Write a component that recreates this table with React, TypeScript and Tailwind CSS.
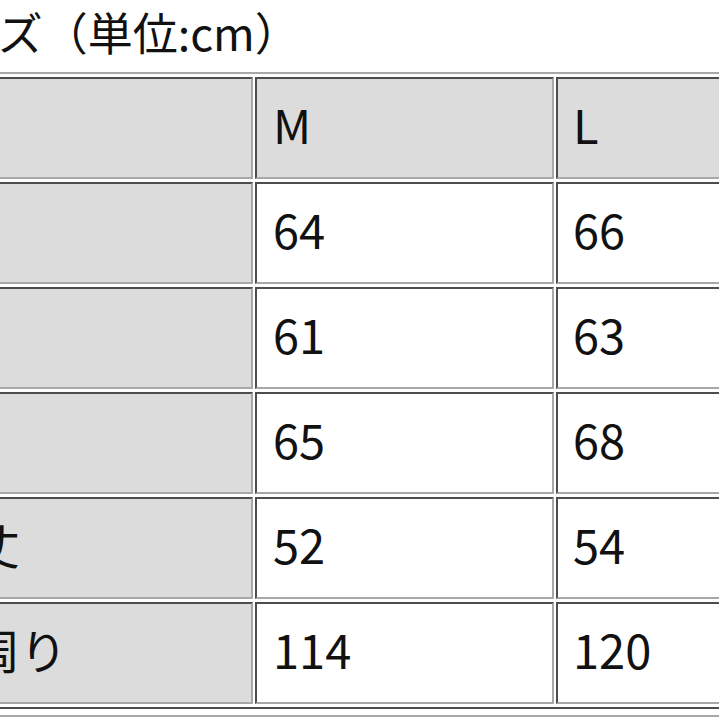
import React from 'react';

const rows = [
  { label: '着', m: '64', l: '66' },
  { label: '肩', m: '61', l: '63' },
  { label: '身', m: '65', l: '68' },
  { label: '袖丈', m: '52', l: '54' },
  { label: '胴周り', m: '114', l: '120' },
];

const cell = 'h-[102px] border-2 border-t-[#4d4d4d] border-l-[#4d4d4d] border-b-[#a8a8a8] border-r-[#a8a8a8] pb-[10px] text-left align-middle font-normal';

export default function App() {
  return (
    <div
      className="w-full h-[719px] overflow-hidden bg-white text-[#111]"
      style={{ fontFamily: '"Noto Sans CJK JP", "Noto Sans", sans-serif' }}
    >
      <div className="ml-[-91px] w-max">
        <div className="h-[72px] text-[45px] leading-[64px] whitespace-nowrap">サイズ（単位:cm）</div>
        <table className="border-separate border-spacing-x-[2px] border-spacing-y-[3px] border-2 border-t-[#a8a8a8] border-l-[#a8a8a8] border-b-[#4d4d4d] border-r-[#4d4d4d] text-[47px] leading-none">
          <thead>
            <tr>
              <th className={`${cell} pl-[11px] w-[340px] bg-[#dcdcdc]`}></th>
              <th className={`${cell} pl-[16px] w-[299px] bg-[#dcdcdc]`}>M</th>
              <th className={`${cell} pl-[15px] w-[299px] bg-[#dcdcdc]`}>L</th>
            </tr>
          </thead>
          <tbody>
            {rows.map((r) => (
              <tr key={r.label}>
                <td className={`${cell} pl-[11px] bg-[#dcdcdc]`}>{r.label}</td>
                <td className={`${cell} pl-[16px] bg-white`}>{r.m}</td>
                <td className={`${cell} pl-[15px] bg-white`}>{r.l}</td>
              </tr>
            ))}
          </tbody>
        </table>
        <div className="mt-[6px] w-[1200px] border-t-2 border-[#a8a8a8]"></div>
      </div>
    </div>
  );
}
